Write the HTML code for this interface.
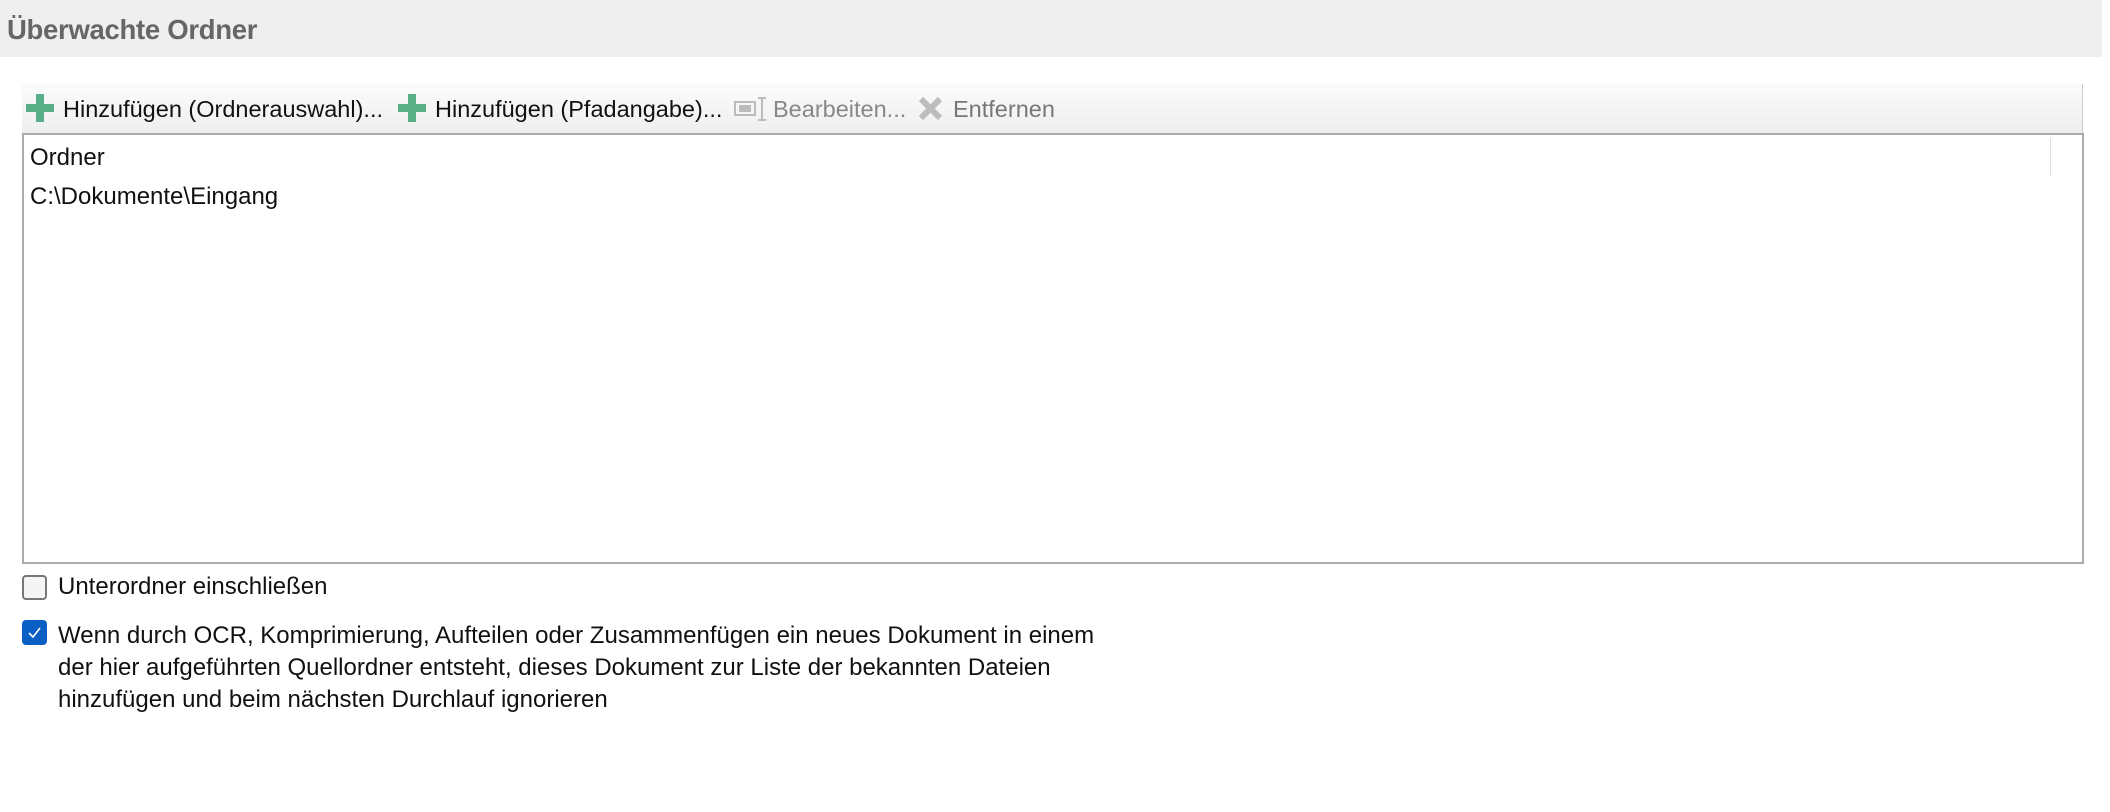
<!DOCTYPE html>
<html><head><meta charset="utf-8"><style>
body{margin:0;width:2110px;height:812px;background:#fff;font-family:"Segoe UI","Liberation Sans",sans-serif;position:relative;overflow:hidden;color:#111}
.band{position:absolute;left:0;top:0;width:2102px;height:57px;background:#efefef}
.title{position:absolute;left:7px;top:14px;font-size:27.5px;font-weight:bold;color:#666;letter-spacing:-0.3px}
.tb{position:absolute;left:22px;top:84px;width:2060px;height:49px;background:linear-gradient(#fbfbfb,#efefef);border-right:1px solid #ccc}
.it{position:absolute;top:94px;font-size:23.5px;line-height:30px;white-space:nowrap}
.list{position:absolute;left:22px;top:133px;width:2058px;height:427px;border:2px solid #ababab}
.t{position:absolute;font-size:24px;white-space:nowrap;line-height:30px}
.cb{position:absolute;left:22px;width:22px;height:22px;border-radius:4px}
</style></head><body>
<div class="band"></div>
<div class="title">Überwachte Ordner</div>
<div class="tb"></div>
<svg style="position:absolute;left:26px;top:94px" width="28" height="28"><path d="M10 0h8v10h10v8H18v10h-8V18H0v-8h10z" fill="#58ae87"/></svg>
<div class="it" style="left:63px">Hinzufügen (Ordnerauswahl)...</div>
<svg style="position:absolute;left:398px;top:94px" width="28" height="28"><path d="M10 0h8v10h10v8H18v10h-8V18H0v-8h10z" fill="#58ae87"/></svg>
<div class="it" style="left:435px">Hinzufügen (Pfadangabe)...</div>
<svg style="position:absolute;left:734px;top:96px" width="34" height="26"><rect x="1" y="6" width="20" height="13" fill="none" stroke="#bbb" stroke-width="2"/><rect x="5" y="9" width="12" height="7" fill="#bbb"/><path d="M24 2h8M28 2v22M24 24h8" stroke="#bbb" stroke-width="2" fill="none"/></svg>
<div class="it" style="left:773px;color:#888">Bearbeiten...</div>
<svg style="position:absolute;left:918px;top:96px" width="25" height="25"><path d="M3 3L22 22M22 3L3 22" stroke="#bdbdbd" stroke-width="6"/></svg>
<div class="it" style="left:953px;color:#777">Entfernen</div>
<div class="list"></div>
<div style="position:absolute;left:2050px;top:138px;width:1px;height:38px;background:#ddd"></div>
<div class="t" style="left:30px;top:143px">Ordner</div>
<div class="t" style="left:30px;top:182px">C:\Dokumente\Eingang</div>
<div class="cb" style="top:575px;border:2px solid #777;background:#f5f5f5;width:21px;height:21px"></div>
<div class="t" style="left:58px;top:572px">Unterordner einschließen</div>
<div class="cb" style="top:620px;background:#0a5fc4;width:25px;height:25px"><svg width="25" height="25"><path d="M7 13l4 4 7-9" stroke="#fff" stroke-width="1.6" fill="none"/></svg></div>
<div class="t" style="left:58px;top:620px;line-height:32px">Wenn durch OCR, Komprimierung, Aufteilen oder Zusammenfügen ein neues Dokument in einem<br>der hier aufgeführten Quellordner entsteht, dieses Dokument zur Liste der bekannten Dateien<br>hinzufügen und beim nächsten Durchlauf ignorieren</div>
</body></html>
